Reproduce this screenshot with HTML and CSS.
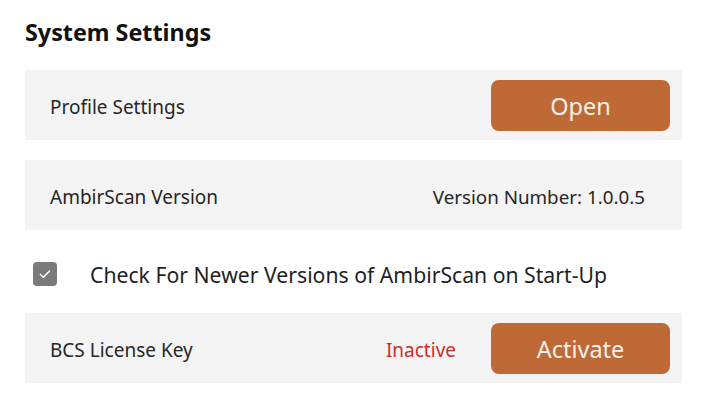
FILE: index.html
```html
<!DOCTYPE html>
<html>
<head>
<meta charset="utf-8">
<link rel="stylesheet" href="styles.css">
</head>
<body>
<div class="page">
  <h1 class="title">System Settings</h1>
  <div class="row">
    <span class="label">Profile Settings</span>
    <button class="btn">Open</button>
  </div>
  <div class="row row-version">
    <span class="label">AmbirScan Version</span>
    <span class="value">Version Number: 1.0.0.5</span>
  </div>
  <div class="check-row">
    <span class="checkbox"><svg viewBox="0 0 24 24" width="24" height="24"><path d="M6.5 12.5l3.5 3.5 7.5-7.5" fill="none" stroke="#fff" stroke-width="1.8" stroke-linecap="round" stroke-linejoin="round"/></svg></span>
    <span class="check-label">Check For Newer Versions of AmbirScan on Start-Up</span>
  </div>
  <div class="row">
    <span class="label">BCS License Key</span>
    <span class="status">Inactive</span>
    <button class="btn">Activate</button>
  </div>
</div>
</body>
</html>
```
FILE: styles.css
```css
* { box-sizing: border-box; }
body {
  margin: 0;
  background: #fff;
  font-family: "Noto Sans", "Open Sans", sans-serif;
  color: #1f1f1f;
}
.page {
  width: 682px;
  padding: 0 0 0 25px;
}
.title {
  margin: 0;
  height: 70px;
  padding-top: 16px;
  font-size: 23.3px;
  line-height: 32px;
  font-weight: 700;
  color: #111;
}
.row {
  display: flex;
  align-items: center;
  height: 70px;
  background: #f4f4f4;
  padding: 0 12px 0 25px;
  margin-bottom: 20px;
}
.row:last-child { margin-bottom: 0; }
.label {
  flex: 1;
  font-size: 19px;
  color: #262626;
  padding-top: 3px;
}
.row-version { padding-right: 37px; margin-bottom: 0; }
.value {
  font-size: 18.8px;
  color: #262626;
  padding-top: 3px;
}
.btn {
  width: 179px;
  height: 51px;
  border: none;
  border-radius: 8px;
  background: #bf6a36;
  color: #f7f0ea;
  font-family: inherit;
  font-size: 23.5px;
  padding: 2px 0 0;
}
.status {
  color: #d12a2f;
  font-size: 19px;
  margin-right: 35px;
  padding-top: 3px;
}
.check-row {
  display: flex;
  align-items: center;
  height: 83px;
  padding: 4px 0 0 8px;
}
.checkbox {
  width: 24px;
  height: 24px;
  border-radius: 4px;
  background: #7a7a7a;
  display: flex;
  align-items: center;
  justify-content: center;
  margin-right: 33px;
}
.checkbox svg { width: 20px; height: 20px; }
.check-label {
  font-size: 21.2px;
  color: #1f1f1f;
  padding-top: 1px;
}
```
